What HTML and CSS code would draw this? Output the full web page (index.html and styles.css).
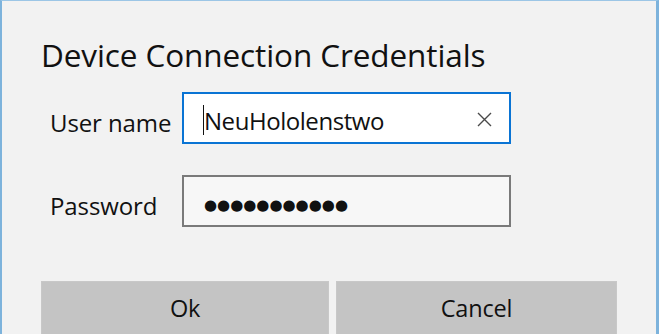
FILE: index.html
```html
<!DOCTYPE html>
<html>
<head>
<meta charset="utf-8">
<link rel="stylesheet" href="styles.css">
</head>
<body>
<div class="dialog">
  <h1 class="title">Device Connection Credentials</h1>
  <div class="form">
    <label class="label">User name</label>
    <div class="field focused">
      <span class="caret"></span><span class="value">NeuHololenstwo</span>
      <svg class="clear" width="15" height="15" viewBox="0 0 15 15"><path d="M1 1L14 14M14 1L1 14" stroke="#4a4a4a" stroke-width="1.4" fill="none"/></svg>
    </div>
    <label class="label">Password</label>
    <div class="field pwd">
      <span class="dots">●●●●●●●●●●●</span>
    </div>
  </div>
  <div class="buttons">
    <button class="btn">Ok</button>
    <button class="btn">Cancel</button>
  </div>
</div>
</body>
</html>
```
FILE: styles.css
```css
html, body {
  margin: 0;
  padding: 0;
  background: #f2f2f2;
  overflow: hidden;
}
.dialog {
  box-sizing: border-box;
  width: 659px;
  height: 334px;
  overflow: hidden;
  background: #f2f2f2;
  border-left: 2px solid #7db3dc;
  border-top: 1px solid #9cc6e6;
  border-right: 3px solid #7db3dc;
  font-family: "Open Sans", "Noto Sans", sans-serif;
  color: #111;
  padding: 0 0 0 39px;
}
.title {
  margin: 34px 0 0 0;
  font-weight: 400;
  font-size: 31.5px;
  line-height: 40px;
  letter-spacing: -0.1px;
}
.form {
  display: grid;
  grid-template-columns: 141px 329px;
  row-gap: 31px;
  margin-top: 17px;
  align-items: center;
}
.label {
  font-size: 24px;
  padding: 9px 0 0 9px;
  letter-spacing: -0.1px;
  white-space: nowrap;
}
.field {
  box-sizing: border-box;
  height: 52px;
  border: 2px solid #7a7a7a;
  background: #f7f7f7;
  display: flex;
  align-items: center;
  padding-left: 19px;
  position: relative;
}
.field.focused {
  border-color: #0a74d4;
  background: #fff;
}
.caret {
  width: 1px;
  height: 30px;
  background: #111;
  margin-top: 4px;
}
.value {
  font-size: 24px;
  letter-spacing: -0.45px;
  flex: 1;
  padding-top: 5px;
}
.clear {
  margin-right: 17px;
  margin-top: 3px;
}
.dots {
  font-family: "DejaVu Sans", sans-serif;
  font-size: 15px;
  letter-spacing: 0;
  margin-left: 1px;
  padding-top: 7px;
}
.buttons {
  display: flex;
  gap: 7px;
  margin-top: 54px;
}
.btn {
  font-family: "Open Sans", "Noto Sans", sans-serif;
  font-size: 23.5px;
  color: #111;
  background: #c4c4c4;
  border: 1px solid #c8c8c8;
  height: 56px;
  padding: 0 0 2px 0;
  width: 288px;
  letter-spacing: -0.2px;
}
.btn + .btn {
  width: 281px;
}
```
